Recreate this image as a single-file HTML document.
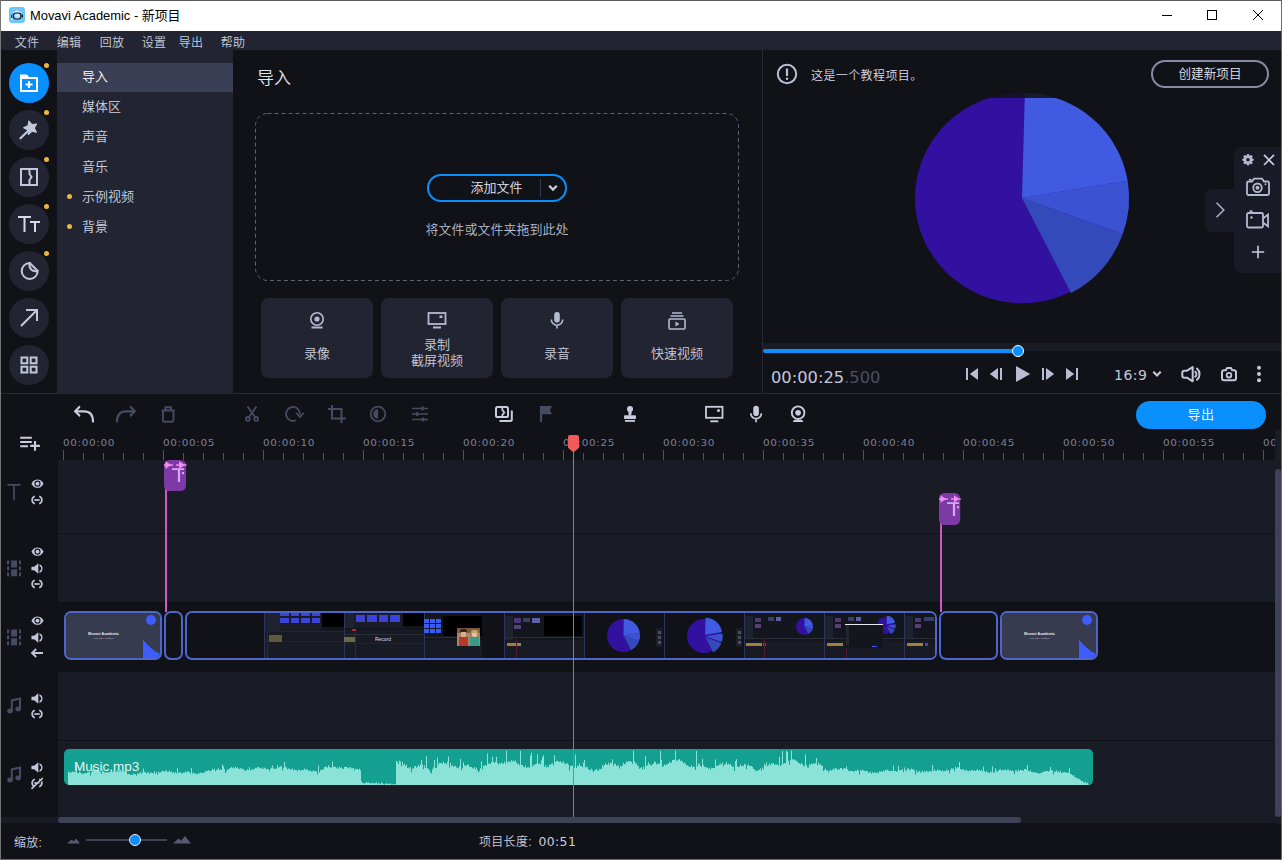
<!DOCTYPE html>
<html lang="zh-CN">
<head>
<meta charset="utf-8">
<title>Movavi Academic - 新项目</title>
<style>
*{box-sizing:border-box;margin:0;padding:0}
html,body{width:1282px;height:860px;overflow:hidden;background:#111217}
body{font-family:"Liberation Sans","Noto Sans CJK SC",sans-serif;color:#d6d9e6;font-size:13px;font-weight:350;position:relative}
.abs{position:absolute}
#win{position:absolute;left:0;top:0;width:1282px;height:860px;background:#111217;overflow:hidden}
#titlebar{position:absolute;left:1px;top:1px;width:1280px;height:30px;background:#fff;color:#000}
#titlebar .ttl{position:absolute;left:29px;top:0;height:30px;line-height:30px;font-size:12.9px;font-weight:400;color:#000;white-space:nowrap}
#menubar{position:absolute;left:1px;top:31px;width:1280px;height:19px;background:#222531}
#menubar span{position:absolute;top:0;height:21px;line-height:24px;font-size:12px;color:#c9ccdd;white-space:nowrap;letter-spacing:0.2px}
#iconcol{position:absolute;left:1px;top:50px;width:56px;height:343px;background:#111217}
.cbtn{position:absolute;left:8px;width:40px;height:40px;border-radius:50%;background:#222531}
.cbtn.on{background:#0a8fff}
.cbtn svg{position:absolute;left:0;top:0}
.ydot{position:absolute;width:5px;height:5px;border-radius:50%;background:#e9b83c}
#side{position:absolute;left:57px;top:50px;width:176px;height:343px;background:#222531}
#side .it{position:absolute;left:0;width:176px;height:29px;line-height:28px;padding-left:25px;font-size:13px;color:#cfd2e0;white-space:nowrap}
#side .it.sel{background:#3a3f55;color:#fff}
#side .b{position:absolute;left:10px;width:5px;height:5px;border-radius:50%;background:#e9b83c}
#main{position:absolute;left:233px;top:50px;width:529px;height:343px;background:#111217}
.tile{position:absolute;top:248px;width:112px;height:80px;border-radius:8px;background:#222531;text-align:center;color:#c9ccda;font-size:13px;line-height:16px}
.tile svg{position:absolute;left:46px;top:12px}
.tile .lb{position:absolute;left:0;width:112px;text-align:center;white-space:nowrap}
#player{position:absolute;left:763px;top:50px;width:518px;height:343px;background:#111217;overflow:hidden}
#tl{position:absolute;left:1px;top:394px;width:1280px;height:430px;background:#111217}
.trk{position:absolute;left:57px;width:1217px;background:#1a1c25}
.tick{position:absolute;width:1px;background:#50556c}
.rl{position:absolute;top:36px;font-family:"DejaVu Sans","Liberation Sans",sans-serif;font-weight:400;font-size:9px;letter-spacing:0.55px;transform:scaleX(1.16);transform-origin:0 0;color:#7a7f98;white-space:nowrap;line-height:12px}
.clip{position:absolute;top:217px;height:49px;border:2px solid #4e66c9;border-radius:7px;overflow:hidden;background:#111217}
#bot{position:absolute;left:1px;top:824px;width:1280px;height:35px;background:#111217}
</style>
</head>
<body>
<div id="win">
<!-- title bar -->
<div id="titlebar">
  <svg class="abs" style="left:8px;top:6px" width="16" height="16" viewBox="0 0 16 16">
    <rect x="0" y="0" width="16" height="16" rx="3" fill="#6cc5fd"/>
    <path d="M3.300 5.900 L8 3.200 L13.300 5.900z" fill="#eaf6ff"/>
    <rect x="4.600" y="6" width="7.300" height="6" rx="2.200" fill="#a6dcfe" stroke="#0c0f16" stroke-width="1.100"/>
    <path d="M6.300 8.200 h4 l-2 1.600z" fill="#f4fbff"/>
    <path d="M11.900 9 l2.100 -1.700 v3.400z" fill="#0c0f16"/>
    <rect x="2.300" y="7.600" width="1" height="3.400" fill="#0c0f16"/>
    <rect x="2.200" y="11.200" width="1.300" height="1.300" fill="#f4fbff"/>
  </svg>
  <div class="ttl">Movavi Academic - 新项目</div>
  <svg class="abs" style="left:1156px;top:4px" width="116" height="22" viewBox="0 0 116 22" fill="none" stroke="#000" stroke-width="1">
    <path d="M5 10.5 H15"/>
    <rect x="50.5" y="5.5" width="9" height="9"/>
    <path d="M96 5 L106 15 M106 5 L96 15"/>
  </svg>
</div>
<!-- menu bar -->
<div id="menubar">
  <span style="left:13.7px">文件</span><span style="left:55.7px">编辑</span><span style="left:98.7px">回放</span><span style="left:140.7px">设置</span><span style="left:177.7px">导出</span><span style="left:219.7px">帮助</span>
</div>
<!-- icon column -->
<div id="iconcol">
  <div class="cbtn on" style="top:13px"><svg width="40" height="40" viewBox="0 0 40 40"><path d="M11 11.5 h7 l2 2.5 h9 v15 h-18 z" fill="#fff"/><rect x="13" y="16" width="14" height="11" fill="#0a8fff"/><path d="M20 18 v7 M16.5 21.5 h7" stroke="#fff" stroke-width="2"/></svg></div>
  <div class="cbtn" style="top:60px"><svg width="40" height="40" viewBox="0 0 40 40"><path d="M11.500 28.300 L19.500 20.500" stroke="#c3c7dc" stroke-width="2.200" stroke-linecap="round"/><path d="M19.87 11.17 L23.00 14.61 L27.60 13.99 L25.30 18.02 L27.32 22.21 L22.76 21.26 L19.41 24.48 L18.90 19.86 L14.80 17.66 L19.04 15.75Z" fill="#c3c7dc" stroke="#c3c7dc" stroke-width="1.200" stroke-linejoin="round"/></svg></div>
  <div class="cbtn" style="top:107px"><svg width="40" height="40" viewBox="0 0 40 40" fill="none" stroke="#c3c7dc" stroke-width="2"><rect x="12" y="12" width="16" height="16"/><path d="M20.5 12 v5 l2 3 -2 3 v5"/></svg></div>
  <div class="cbtn" style="top:154px"><svg width="40" height="40" viewBox="0 0 40 40" fill="none" stroke="#d6d9ea" stroke-width="2"><path d="M9 13 h13 M15.5 13 v15"/><path d="M21 18 h10 M26 18 v10"/></svg></div>
  <div class="cbtn" style="top:201px"><svg width="40" height="40" viewBox="0 0 40 40" fill="none" stroke="#c3c7dc" stroke-width="2"><path d="M20.700 12 a8 8 0 1 0 8 8 c-5.500 1.300 -9.300 -2.700 -8 -8z"/><path d="M20.700 12 l8 8"/></svg></div>
  <div class="cbtn" style="top:248px"><svg width="40" height="40" viewBox="0 0 40 40" fill="none" stroke="#c3c7dc" stroke-width="2"><path d="M12 28 L28 12 M17 12 h11 v11"/></svg></div>
  <div class="cbtn" style="top:295px"><svg width="40" height="40" viewBox="0 0 40 40" fill="none" stroke="#c3c7dc" stroke-width="2"><rect x="12.500" y="12.500" width="5.800" height="5.800"/><rect x="21.700" y="12.500" width="5.800" height="5.800"/><rect x="12.500" y="21.700" width="5.800" height="5.800"/><rect x="21.700" y="21.700" width="5.800" height="5.800"/></svg></div>
  <div class="ydot" style="left:43px;top:13px"></div>
  <div class="ydot" style="left:43px;top:60px"></div>
  <div class="ydot" style="left:43px;top:107px"></div>
  <div class="ydot" style="left:43px;top:154px"></div>
  <div class="ydot" style="left:43px;top:201px"></div>
</div>
<!-- side list -->
<div id="side">
  <div class="it sel" style="top:13px">导入</div>
  <div class="it" style="top:43px">媒体区</div>
  <div class="it" style="top:73px">声音</div>
  <div class="it" style="top:103px">音乐</div>
  <div class="it" style="top:133px">示例视频</div>
  <div class="it" style="top:163px">背景</div>
  <div class="b" style="top:144px"></div>
  <div class="b" style="top:174px"></div>
</div>
<!-- import panel -->
<div id="main">
  <div class="abs" style="left:24px;top:17px;font-size:17px;line-height:24px;color:#e3e5f0">导入</div>
  <svg class="abs" style="left:22px;top:63px" width="485" height="169" viewBox="0 0 485 169" fill="none"><rect x="0.5" y="0.5" width="483" height="167" rx="12" stroke="#5d627a" stroke-width="1" stroke-dasharray="4 3"/></svg>
  <div class="abs" style="left:194px;top:124px;width:140px;height:28px;border:2px solid #0a8fff;border-radius:14px"></div>
  <div class="abs" style="left:194px;top:124px;width:113px;height:28px;line-height:27px;text-align:center;padding-left:26px;font-size:13px;color:#e3e5f0">添加文件</div>
  <div class="abs" style="left:307px;top:129px;width:1px;height:18px;background:#353a4e"></div>
  <svg class="abs" style="left:314.5px;top:134px" width="10" height="8" viewBox="0 0 10 8" fill="none" stroke="#c9ccdd" stroke-width="2.300"><path d="M1.200 1.800 L5 5.600 L8.800 1.800"/></svg>
  <div class="abs" style="left:22px;top:171px;width:484px;text-align:center;font-size:13px;line-height:18px;color:#b9bccd">将文件或文件夹拖到此处</div>

  <div class="tile" style="left:28px"><svg width="20" height="22" viewBox="0 0 20 22" fill="none" stroke="#b5b9d0" stroke-width="1.600"><circle cx="10" cy="9" r="6.200"/><circle cx="10" cy="9" r="2.600" fill="#b5b9d0" stroke="none"/><path d="M4.500 17.500 h11" stroke-width="2"/></svg><div class="lb" style="top:47.5px">录像</div></div>
  <div class="tile" style="left:148px"><svg width="20" height="22" viewBox="0 0 20 22" fill="none" stroke="#b5b9d0" stroke-width="1.800"><rect x="1.500" y="3" width="17" height="11"/><rect x="12.500" y="5.500" width="3" height="2.500" fill="#b5b9d0" stroke="none"/><path d="M6 17.500 h8" stroke-width="2"/></svg><div class="lb" style="top:39px">录制</div><div class="lb" style="top:55px">截屏视频</div></div>
  <div class="tile" style="left:268px"><svg width="20" height="22" viewBox="0 0 20 22" fill="none" stroke="#b5b9d0" stroke-width="1.600"><rect x="7.200" y="2" width="5.600" height="10.500" rx="2.800" fill="#b5b9d0" stroke="none"/><path d="M4.300 9.500 a5.700 5.700 0 0 0 11.400 0 M10 15.200 v3.300"/></svg><div class="lb" style="top:47.5px">录音</div></div>
  <div class="tile" style="left:388px"><svg width="20" height="22" viewBox="0 0 20 22" fill="none" stroke="#b5b9d0" stroke-width="1.600"><path d="M5 3 h10 M3.500 6 h13"/><rect x="2" y="9" width="16" height="10" rx="1"/><path d="M8.500 11.500 l4 2.500 -4 2.500z" fill="#b5b9d0" stroke="none"/></svg><div class="lb" style="top:47.5px">快速视频</div></div>
</div>
<div class="abs" style="left:762px;top:50px;width:1px;height:343px;background:#262935"></div>
<div class="abs" style="left:1px;top:393px;width:1280px;height:1px;background:#262935"></div>

<!-- player -->
<div id="player">
  <svg class="abs" style="left:139px;top:27.5px" width="240" height="240" viewBox="-120 -120 240 240">
    <ellipse cx="0" cy="0" rx="107" ry="105.3" fill="#3311a0"/>
    <path d="M0 0 L2.9 -105.3 A107 105.3 0 0 1 105.600 -17.200 Z" fill="#405be1"/>
    <path d="M0 0 L105.600 -17.200 A107 105.3 0 0 1 100.700 36 Z" fill="#3b53d2"/>
    <path d="M0 0 L100.700 36 A107 105.3 0 0 1 49 95.100 Z" fill="#354aba"/>
  </svg>
  <div class="abs" style="left:0;top:0;width:518px;height:47.5px;background:rgba(17,18,23,0.87)"></div>
  <svg class="abs" style="left:13px;top:13px" width="22" height="22" viewBox="0 0 22 22" fill="none" stroke="#bcc0d6" stroke-width="2"><circle cx="11" cy="11" r="9.200"/><path d="M11 5.500 v7.500" stroke-width="2.200"/><circle cx="11" cy="15.800" r="1.200" fill="#c3c7dc" stroke="none"/></svg>
  <div class="abs" style="left:48px;top:16.5px;font-size:12px;line-height:18px;color:#d6d9e6;letter-spacing:0.4px;white-space:nowrap">这是一个教程项目。</div>
  <div class="abs" style="left:388px;top:10px;width:118px;height:28px;border:2px solid #858aa6;border-radius:14px;text-align:center;line-height:24px;font-size:12.6px;color:#e3e5f0;letter-spacing:0">创建新项目</div>

  <!-- floating tool panel -->
  <div class="abs" style="left:442px;top:138.5px;width:30px;height:43px;background:#181a26;border-radius:6px 0 0 6px"></div>
  <div class="abs" style="left:471px;top:97px;width:48px;height:126px;background:#181a26;border-radius:7px 0 0 7px"></div>
  <svg class="abs" style="left:450px;top:150px" width="14" height="20" viewBox="0 0 14 20" fill="none" stroke="#a9adc6" stroke-width="1.600"><path d="M3.500 2.800 L10.800 10 L3.500 17.200"/></svg>
  <svg class="abs" style="left:478px;top:103px" width="14" height="14" viewBox="0 0 14 14"><g fill="#b5b9d0"><circle cx="7" cy="6.700" r="4.200"/><rect x="5.700" y="1" width="2.600" height="11.400" rx="0.800"/><rect x="5.700" y="1" width="2.600" height="11.400" rx="0.800" transform="rotate(45 7 6.700)"/><rect x="5.700" y="1" width="2.600" height="11.400" rx="0.800" transform="rotate(90 7 6.700)"/><rect x="5.700" y="1" width="2.600" height="11.400" rx="0.800" transform="rotate(135 7 6.700)"/></g><circle cx="7" cy="6.700" r="1.700" fill="#181a26"/></svg>
  <svg class="abs" style="left:499px;top:103px" width="14" height="14" viewBox="0 0 14 14" fill="none" stroke="#c9ccdd" stroke-width="1.700"><path d="M2 1.800 L12 12 M12 1.800 L2 12"/></svg>
  <svg class="abs" style="left:482px;top:126px" width="26" height="22" viewBox="0 0 26 22" fill="none" stroke="#b5b9d0" stroke-width="1.800"><path d="M3.500 5.500 h3.500 l2 -2.800 h8 l2 2.800 h3.500 a1.500 1.500 0 0 1 1.500 1.500 v10.500 a1.500 1.500 0 0 1 -1.500 1.500 h-19 a1.500 1.500 0 0 1 -1.500 -1.500 v-10.500 a1.500 1.500 0 0 1 1.500 -1.500z"/><circle cx="12.500" cy="11.800" r="4.300"/><circle cx="12.500" cy="11.800" r="2" fill="#b5b9d0" stroke="none"/><circle cx="20.500" cy="8.300" r="1" fill="#b5b9d0" stroke="none"/><path d="M4 3.800 h2.500" stroke-width="1.800"/></svg>
  <svg class="abs" style="left:482px;top:159px" width="26" height="22" viewBox="0 0 26 22" fill="none" stroke="#b5b9d0" stroke-width="1.800"><rect x="2" y="4" width="16" height="14.500" rx="1.500"/><path d="M18 9.500 l5 -4 v12 l-5 -4"/><circle cx="6.500" cy="8.500" r="1.200" fill="#b5b9d0" stroke="none"/><path d="M4.500 2.300 h3" stroke-width="1.800"/></svg>
  <svg class="abs" style="left:488px;top:195px" width="14" height="14" viewBox="0 0 14 14" fill="none" stroke="#c9ccdd" stroke-width="1.600"><path d="M7 0.800 v12.400 M0.800 7 h12.400"/></svg>

  <!-- progress -->
  <div class="abs" style="left:0;top:293px;width:518px;height:8px;background:#1a1c25"></div>
  <div class="abs" style="left:0;top:299px;width:255px;height:4px;background:#0a8fff;border-radius:2px"></div>
  <div class="abs" style="left:249px;top:295px;width:12px;height:12px;border-radius:50%;background:#0a8fff;border:1.500px solid #fff"></div>
  <div class="abs" style="left:8px;top:314px;font-family:'DejaVu Sans','Liberation Sans',sans-serif;font-weight:400;font-size:16.300px;line-height:28px;color:#c3c7dc;white-space:nowrap">00:00:25<span style="color:#4a4f63">.500</span></div>
  <!-- transport -->
  <svg class="abs" style="left:200px;top:314px" width="120" height="20" viewBox="0 0 120 20" fill="#b8bcd4">
    <rect x="3" y="4" width="2" height="12"/><path d="M15 4 v12 l-8.200 -6z"/>
    <path d="M35 4 v12 l-8.200 -6z"/><rect x="37" y="4" width="2" height="12"/>
    <path d="M53 2 v16 l14.200 -8z"/>
    <rect x="79" y="4" width="2" height="12"/><path d="M83 4 v12 l8.200 -6z"/>
    <path d="M103 4 v12 l8.200 -6z"/><rect x="113" y="4" width="2" height="12"/>
  </svg>
  <div class="abs" style="left:351px;top:314px;font-family:'DejaVu Sans','Liberation Sans',sans-serif;font-weight:400;font-size:14px;letter-spacing:0.500px;line-height:22px;color:#c3c7dc;white-space:nowrap">16:9</div>
  <svg class="abs" style="left:389px;top:320px" width="10" height="8" viewBox="0 0 10 8" fill="none" stroke="#c3c7dc" stroke-width="2.200"><path d="M1.300 1.800 L5 5.500 L8.700 1.800"/></svg>
  <svg class="abs" style="left:416px;top:313px" width="24" height="22" viewBox="0 0 24 22" fill="none" stroke="#c3c7dc" stroke-width="2" stroke-linejoin="round" stroke-linecap="round"><path d="M5.300 7.700 h2.700 l5.700 -3.600 v14.200 l-5.700 -3.600 h-2.700 a2 2 0 0 1 -2 -2 v-3 a2 2 0 0 1 2 -2z"/><path d="M16.300 8.700 a3.300 3.300 0 0 1 0 5"/><path d="M18 5.600 a7.400 7.400 0 0 1 0 11.200"/></svg>
  <svg class="abs" style="left:456px;top:314px" width="20" height="20" viewBox="0 0 20 20" fill="none" stroke="#c3c7dc" stroke-width="2" stroke-linejoin="round"><path d="M5 6.200 h1.800 l1.200 -2.200 h4 l1.200 2.200 h1.800 a2 2 0 0 1 2 2 v6.100 a2 2 0 0 1 -2 2 h-10 a2 2 0 0 1 -2 -2 v-6.100 a2 2 0 0 1 2 -2z"/><circle cx="10" cy="11.200" r="2.300" stroke-width="1.800"/></svg>
  <svg class="abs" style="left:492px;top:314px" width="8" height="20" viewBox="0 0 8 20" fill="#c3c7dc"><circle cx="4" cy="3.800" r="2"/><circle cx="4" cy="10" r="2"/><circle cx="4" cy="16.200" r="2"/></svg>
</div>
<!-- timeline -->
<div id="tl">
<svg class="abs" style="left:71px;top:9px" width="24" height="20" viewBox="0 0 24 20" ><path d="M7.300 4 L3.300 8.300 L7.300 12.600" fill="none" stroke="#c9ccdd" stroke-width="2.200" stroke-linejoin="round" stroke-linecap="round"/><path d="M3.300 8.300 H12 C18 8.300 21 12 21 18.600" fill="none" stroke="#c9ccdd" stroke-width="2.200" stroke-linecap="round"/></svg>
<svg class="abs" style="left:113px;top:9px" width="24" height="20" viewBox="0 0 24 20" ><path d="M16.700 4 L20.700 8.300 L16.700 12.600" fill="none" stroke="#464b62" stroke-width="2.200" stroke-linejoin="round" stroke-linecap="round"/><path d="M20.700 8.300 H12 C6 8.300 3 12 3 18.600" fill="none" stroke="#464b62" stroke-width="2.200" stroke-linecap="round"/></svg>
<svg class="abs" style="left:158px;top:9.5px" width="18" height="20" viewBox="0 0 18 20" ><path d="M4 6.500 h10.500 v10 a1.200 1.200 0 0 1 -1.200 1.200 h-8.100 a1.200 1.200 0 0 1 -1.200 -1.200z M2.700 6.500 h13 M6.500 6 v-2.800 h5.500 v2.800" fill="none" stroke="#464b62" stroke-width="1.900"/></svg>
<svg class="abs" style="left:242px;top:10px" width="18" height="20" viewBox="0 0 18 20" ><g fill="none" stroke="#464b62" stroke-width="1.800"><path d="M4.500 2.500 L12.200 13.300 M13.500 2.500 L5.800 13.300"/><circle cx="4.800" cy="14.900" r="1.900"/><circle cx="13.200" cy="14.900" r="1.900"/></g></svg>
<svg class="abs" style="left:283px;top:10px" width="22" height="20" viewBox="0 0 22 20" ><path d="M12 16.300 A7 7 0 1 1 16 10.600" fill="none" stroke="#464b62" stroke-width="1.800"/><path d="M12.300 8.700 L16 13.200 L19.700 8.700" fill="none" stroke="#464b62" stroke-width="1.800"/></svg>
<svg class="abs" style="left:325px;top:9px" width="22" height="22" viewBox="0 0 22 22" ><path d="M6 2 V15.500 H20 M2 6 H15.500 V20" fill="none" stroke="#464b62" stroke-width="2"/></svg>
<svg class="abs" style="left:367px;top:10px" width="20" height="20" viewBox="0 0 20 20" ><circle cx="10" cy="10" r="7.300" fill="none" stroke="#464b62" stroke-width="1.800"/><path d="M10 5.200 a4.800 4.800 0 0 0 0 9.600z" fill="#464b62"/></svg>
<svg class="abs" style="left:409px;top:10px" width="20" height="20" viewBox="0 0 20 20" ><g stroke="#464b62" stroke-width="1.700"><path d="M2 4.500 h16 M2 10 h16 M2 15.500 h16"/></g><g fill="#464b62"><rect x="11.300" y="2.600" width="2.600" height="3.800" rx="1"/><rect x="5.800" y="8.100" width="2.600" height="3.800" rx="1"/><rect x="11.800" y="13.600" width="2.600" height="3.800" rx="1"/></g></svg>
<svg class="abs" style="left:492px;top:10px" width="24" height="20" viewBox="0 0 24 20" ><rect x="3" y="3" width="12" height="10.100" rx="1.600" fill="none" stroke="#c9ccdd" stroke-width="2"/><path d="M9.300 3 V6 L11.300 8.500 L9.300 11 V13.500" fill="none" stroke="#c9ccdd" stroke-width="1.800"/><path d="M6.500 17 H17.300 a1.500 1.500 0 0 0 1.500 -1.500 V6.500" fill="none" stroke="#c9ccdd" stroke-width="2"/></svg>
<svg class="abs" style="left:537px;top:10px" width="18" height="20" viewBox="0 0 18 20" ><rect x="1.900" y="2" width="2.200" height="16" fill="#464b62"/><path d="M2 2 H14 L11.900 6.200 L14 10.300 H2z" fill="#464b62"/></svg>
<svg class="abs" style="left:621px;top:10px" width="18" height="20" viewBox="0 0 18 20" ><circle cx="8" cy="5" r="3" fill="#c9ccdd"/><path d="M6.300 6.500 h3.400 l-0.400 5 h-2.600z" fill="#c9ccdd"/><rect x="2" y="11.300" width="12" height="3.700" rx="1" fill="#c9ccdd"/><rect x="3" y="16" width="10" height="1.800" fill="#c9ccdd"/></svg>
<svg class="abs" style="left:702px;top:10px" width="22" height="20" viewBox="0 0 22 20" ><rect x="3" y="2.800" width="16.500" height="11" fill="none" stroke="#c9ccdd" stroke-width="1.800"/><circle cx="15.500" cy="6.400" r="1.500" fill="#c9ccdd"/><path d="M7.300 17.300 h8" stroke="#c9ccdd" stroke-width="1.900"/></svg>
<svg class="abs" style="left:746px;top:10px" width="18" height="20" viewBox="0 0 18 20" ><rect x="6.300" y="1.800" width="5.600" height="10.300" rx="2.800" fill="#c9ccdd"/><path d="M3.800 9.300 a5.300 5.300 0 0 0 10.600 0 M9.100 14.600 v3.600" fill="none" stroke="#c9ccdd" stroke-width="1.700"/></svg>
<svg class="abs" style="left:787px;top:10px" width="20" height="20" viewBox="0 0 20 20" ><circle cx="10.100" cy="8.700" r="6.300" fill="none" stroke="#c9ccdd" stroke-width="1.900"/><circle cx="10.100" cy="8.700" r="2.800" fill="#c9ccdd"/><path d="M6.300 15.800 H13.900 L15.500 18 H4.700z" fill="#c9ccdd"/></svg>
<div class="abs" style="left:1135px;top:7px;width:130px;height:28px;border-radius:14px;background:#0a8fff;color:#fff;text-align:center;line-height:27px;font-size:13px;letter-spacing:0.500px">导出</div>
<svg class="abs" style="left:18px;top:41px" width="24" height="18" viewBox="0 0 24 18" ><g stroke="#c9ccdd" stroke-width="2.100"><path d="M1.200 2.700 h11.600 M1.200 7 h11.600 M1.200 11.200 h7.800"/><path d="M16 6 v9.800 M11.200 10.900 h9.700"/></g></svg>
<div class="rl" style="left:62px;top:43px">00:00:00</div>
<div class="rl" style="left:162px;top:43px">00:00:05</div>
<div class="rl" style="left:262px;top:43px">00:00:10</div>
<div class="rl" style="left:362px;top:43px">00:00:15</div>
<div class="rl" style="left:462px;top:43px">00:00:20</div>
<div class="rl" style="left:562px;top:43px">00:00:25</div>
<div class="rl" style="left:662px;top:43px">00:00:30</div>
<div class="rl" style="left:762px;top:43px">00:00:35</div>
<div class="rl" style="left:862px;top:43px">00:00:40</div>
<div class="rl" style="left:962px;top:43px">00:00:45</div>
<div class="rl" style="left:1062px;top:43px">00:00:50</div>
<div class="rl" style="left:1162px;top:43px">00:00:55</div>
<div class="rl" style="left:1262px;top:43px">00:01:00</div>
<div class="tick" style="left:62px;top:56px;height:10px"></div><div class="tick" style="left:82px;top:59px;height:7px"></div><div class="tick" style="left:102px;top:59px;height:7px"></div><div class="tick" style="left:122px;top:59px;height:7px"></div><div class="tick" style="left:142px;top:59px;height:7px"></div><div class="tick" style="left:162px;top:56px;height:10px"></div><div class="tick" style="left:182px;top:59px;height:7px"></div><div class="tick" style="left:202px;top:59px;height:7px"></div><div class="tick" style="left:222px;top:59px;height:7px"></div><div class="tick" style="left:242px;top:59px;height:7px"></div><div class="tick" style="left:262px;top:56px;height:10px"></div><div class="tick" style="left:282px;top:59px;height:7px"></div><div class="tick" style="left:302px;top:59px;height:7px"></div><div class="tick" style="left:322px;top:59px;height:7px"></div><div class="tick" style="left:342px;top:59px;height:7px"></div><div class="tick" style="left:362px;top:56px;height:10px"></div><div class="tick" style="left:382px;top:59px;height:7px"></div><div class="tick" style="left:402px;top:59px;height:7px"></div><div class="tick" style="left:422px;top:59px;height:7px"></div><div class="tick" style="left:442px;top:59px;height:7px"></div><div class="tick" style="left:462px;top:56px;height:10px"></div><div class="tick" style="left:482px;top:59px;height:7px"></div><div class="tick" style="left:502px;top:59px;height:7px"></div><div class="tick" style="left:522px;top:59px;height:7px"></div><div class="tick" style="left:542px;top:59px;height:7px"></div><div class="tick" style="left:562px;top:56px;height:10px"></div><div class="tick" style="left:582px;top:59px;height:7px"></div><div class="tick" style="left:602px;top:59px;height:7px"></div><div class="tick" style="left:622px;top:59px;height:7px"></div><div class="tick" style="left:642px;top:59px;height:7px"></div><div class="tick" style="left:662px;top:56px;height:10px"></div><div class="tick" style="left:682px;top:59px;height:7px"></div><div class="tick" style="left:702px;top:59px;height:7px"></div><div class="tick" style="left:722px;top:59px;height:7px"></div><div class="tick" style="left:742px;top:59px;height:7px"></div><div class="tick" style="left:762px;top:56px;height:10px"></div><div class="tick" style="left:782px;top:59px;height:7px"></div><div class="tick" style="left:802px;top:59px;height:7px"></div><div class="tick" style="left:822px;top:59px;height:7px"></div><div class="tick" style="left:842px;top:59px;height:7px"></div><div class="tick" style="left:862px;top:56px;height:10px"></div><div class="tick" style="left:882px;top:59px;height:7px"></div><div class="tick" style="left:902px;top:59px;height:7px"></div><div class="tick" style="left:922px;top:59px;height:7px"></div><div class="tick" style="left:942px;top:59px;height:7px"></div><div class="tick" style="left:962px;top:56px;height:10px"></div><div class="tick" style="left:982px;top:59px;height:7px"></div><div class="tick" style="left:1002px;top:59px;height:7px"></div><div class="tick" style="left:1022px;top:59px;height:7px"></div><div class="tick" style="left:1042px;top:59px;height:7px"></div><div class="tick" style="left:1062px;top:56px;height:10px"></div><div class="tick" style="left:1082px;top:59px;height:7px"></div><div class="tick" style="left:1102px;top:59px;height:7px"></div><div class="tick" style="left:1122px;top:59px;height:7px"></div><div class="tick" style="left:1142px;top:59px;height:7px"></div><div class="tick" style="left:1162px;top:56px;height:10px"></div><div class="tick" style="left:1182px;top:59px;height:7px"></div><div class="tick" style="left:1202px;top:59px;height:7px"></div><div class="tick" style="left:1222px;top:59px;height:7px"></div><div class="tick" style="left:1242px;top:59px;height:7px"></div><div class="tick" style="left:1262px;top:56px;height:10px"></div>
<div class="abs" style="left:1274px;top:36px;width:6px;height:394px;background:#1a1c25"></div>
<div class="abs" style="left:1274px;top:75px;width:6px;height:348px;background:#3d4259;border-radius:3px"></div>
<div class="trk" style="top:66px;height:73px"></div>
<div class="trk" style="top:140px;height:68px"></div>
<div class="trk" style="top:278px;height:68px"></div>
<div class="trk" style="top:347px;height:76px"></div>
<div class="abs" style="left:0;top:423px;width:1274px;height:6px;background:#1a1c25"></div>
<div class="abs" style="left:57px;top:423px;width:963px;height:6px;background:#3d4259;border-radius:3px"></div>
<svg class="abs" style="left:5px;top:89px" width="16" height="18" viewBox="0 0 16 18" ><path d="M1.500 1.800 h13 M8 1.800 v15.500" stroke="#464b62" stroke-width="1.700" fill="none"/></svg>
<svg class="abs" style="left:29.50px;top:85.35px" width="13" height="9.3" viewBox="0 0 14 10" preserveAspectRatio="none"><path d="M0.400 5 C2.500 1.300 5 0.500 7 0.500 S11.500 1.300 13.600 5 C11.500 8.700 9 9.500 7 9.500 S2.500 8.700 0.400 5z" fill="#c3c7dc"/><circle cx="7" cy="5" r="3.300" fill="#111217"/><circle cx="7" cy="5" r="2.100" fill="#c3c7dc"/></svg>
<svg class="abs" style="left:29.00px;top:101.00px" width="14" height="10" viewBox="0 0 14 10" preserveAspectRatio="none"><path d="M4.800 1.300 a3.900 3.900 0 0 0 0 7.400 M9.200 1.300 a3.900 3.900 0 0 1 0 7.400" fill="none" stroke="#c3c7dc" stroke-width="1.700"/><path d="M4.300 5 h5.400" stroke="#c3c7dc" stroke-width="1.700"/></svg>
<svg class="abs" style="left:5.50px;top:165.50px" width="14.4" height="17" viewBox="0 0 15 17" preserveAspectRatio="none"><g fill="#464b62"><rect x="0" y="0.500" width="2.300" height="3.800"/><rect x="0" y="6.500" width="2.300" height="3.800"/><rect x="0" y="12.500" width="2.300" height="3.800"/><rect x="12.500" y="0.500" width="2.300" height="3.800"/><rect x="12.500" y="6.500" width="2.300" height="3.800"/><rect x="12.500" y="12.500" width="2.300" height="3.800"/><rect x="4.300" y="0.500" width="6.200" height="7"/><rect x="4.300" y="9.300" width="6.200" height="7"/></g></svg>
<svg class="abs" style="left:29.50px;top:153.35px" width="13" height="9.3" viewBox="0 0 14 10" preserveAspectRatio="none"><path d="M0.400 5 C2.500 1.300 5 0.500 7 0.500 S11.500 1.300 13.600 5 C11.500 8.700 9 9.500 7 9.500 S2.500 8.700 0.400 5z" fill="#c3c7dc"/><circle cx="7" cy="5" r="3.300" fill="#111217"/><circle cx="7" cy="5" r="2.100" fill="#c3c7dc"/></svg>
<svg class="abs" style="left:29.80px;top:168.50px" width="12.8" height="11" viewBox="0 0 14 12" preserveAspectRatio="none"><path d="M0.500 4 h3 l4.500 -3.800 v11.600 l-4.500 -3.800 h-3z" fill="#c3c7dc"/><path d="M9.300 1.300 a5 5 0 0 1 0 9.400 v-1.900 a3 3 0 0 0 0 -5.600z" fill="#c3c7dc"/></svg>
<svg class="abs" style="left:29.00px;top:185.00px" width="14" height="10" viewBox="0 0 14 10" preserveAspectRatio="none"><path d="M4.800 1.300 a3.900 3.900 0 0 0 0 7.400 M9.200 1.300 a3.900 3.900 0 0 1 0 7.400" fill="none" stroke="#c3c7dc" stroke-width="1.700"/><path d="M4.300 5 h5.400" stroke="#c3c7dc" stroke-width="1.700"/></svg>
<svg class="abs" style="left:5.50px;top:234.50px" width="14.4" height="17" viewBox="0 0 15 17" preserveAspectRatio="none"><g fill="#464b62"><rect x="0" y="0.500" width="2.300" height="3.800"/><rect x="0" y="6.500" width="2.300" height="3.800"/><rect x="0" y="12.500" width="2.300" height="3.800"/><rect x="12.500" y="0.500" width="2.300" height="3.800"/><rect x="12.500" y="6.500" width="2.300" height="3.800"/><rect x="12.500" y="12.500" width="2.300" height="3.800"/><rect x="4.300" y="0.500" width="6.200" height="7"/><rect x="4.300" y="9.300" width="6.200" height="7"/></g></svg>
<svg class="abs" style="left:29.50px;top:222.35px" width="13" height="9.3" viewBox="0 0 14 10" preserveAspectRatio="none"><path d="M0.400 5 C2.500 1.300 5 0.500 7 0.500 S11.500 1.300 13.600 5 C11.500 8.700 9 9.500 7 9.500 S2.500 8.700 0.400 5z" fill="#c3c7dc"/><circle cx="7" cy="5" r="3.300" fill="#111217"/><circle cx="7" cy="5" r="2.100" fill="#c3c7dc"/></svg>
<svg class="abs" style="left:29.80px;top:237.50px" width="12.8" height="11" viewBox="0 0 14 12" preserveAspectRatio="none"><path d="M0.500 4 h3 l4.500 -3.800 v11.600 l-4.500 -3.800 h-3z" fill="#c3c7dc"/><path d="M9.300 1.300 a5 5 0 0 1 0 9.400 v-1.900 a3 3 0 0 0 0 -5.600z" fill="#c3c7dc"/></svg>
<svg class="abs" style="left:29.00px;top:254.00px" width="14" height="10" viewBox="0 0 14 10" preserveAspectRatio="none"><path d="M13 5 H2.500 M6.200 1 L2 5 L6.200 9" fill="none" stroke="#c3c7dc" stroke-width="1.800"/></svg>
<svg class="abs" style="left:5.50px;top:303.00px" width="15" height="17" viewBox="0 0 15 17" preserveAspectRatio="none"><path d="M4.800 13.800 V3.400 L13 1.600 V11.800" fill="none" stroke="#464b62" stroke-width="2"/><ellipse cx="3" cy="14" rx="2.800" ry="2.400" fill="#464b62"/><ellipse cx="11.200" cy="12" rx="2.800" ry="2.400" fill="#464b62"/></svg>
<svg class="abs" style="left:29.80px;top:298.50px" width="12.8" height="11" viewBox="0 0 14 12" preserveAspectRatio="none"><path d="M0.500 4 h3 l4.500 -3.800 v11.600 l-4.500 -3.800 h-3z" fill="#c3c7dc"/><path d="M9.300 1.300 a5 5 0 0 1 0 9.400 v-1.900 a3 3 0 0 0 0 -5.600z" fill="#c3c7dc"/></svg>
<svg class="abs" style="left:29.00px;top:315.00px" width="14" height="10" viewBox="0 0 14 10" preserveAspectRatio="none"><path d="M4.800 1.300 a3.900 3.900 0 0 0 0 7.400 M9.200 1.300 a3.900 3.900 0 0 1 0 7.400" fill="none" stroke="#c3c7dc" stroke-width="1.700"/><path d="M4.300 5 h5.400" stroke="#c3c7dc" stroke-width="1.700"/></svg>
<svg class="abs" style="left:5.50px;top:372.00px" width="15" height="17" viewBox="0 0 15 17" preserveAspectRatio="none"><path d="M4.800 13.800 V3.400 L13 1.600 V11.800" fill="none" stroke="#464b62" stroke-width="2"/><ellipse cx="3" cy="14" rx="2.800" ry="2.400" fill="#464b62"/><ellipse cx="11.200" cy="12" rx="2.800" ry="2.400" fill="#464b62"/></svg>
<svg class="abs" style="left:29.80px;top:367.50px" width="12.8" height="11" viewBox="0 0 14 12" preserveAspectRatio="none"><path d="M0.500 4 h3 l4.500 -3.800 v11.600 l-4.500 -3.800 h-3z" fill="#c3c7dc"/><path d="M9.300 1.300 a5 5 0 0 1 0 9.400 v-1.900 a3 3 0 0 0 0 -5.600z" fill="#c3c7dc"/></svg>
<svg class="abs" style="left:29.00px;top:384.00px" width="14" height="10" viewBox="0 0 14 10" preserveAspectRatio="none"><path d="M4.800 1.300 a3.900 3.900 0 0 0 0 7.400 M9.200 1.300 a3.900 3.900 0 0 1 0 7.400" fill="none" stroke="#c3c7dc" stroke-width="1.700"/><path d="M4.300 5 h5.400" stroke="#c3c7dc" stroke-width="1.700"/></svg>
<svg class="abs" style="left:29px;top:382px" width="14" height="14" viewBox="0 0 14 14" ><path d="M1.500 12.800 L12.800 2" stroke="#c9ccdd" stroke-width="1.600"/><path d="M3.300 13.300 L13.300 3.300" stroke="#111217" stroke-width="1"/></svg>
<div class="abs" style="left:164px;top:94px;width:2px;height:124px;background:#d256c6"></div>
<div class="abs" style="left:939px;top:126px;width:2px;height:92px;background:#d256c6"></div>
<svg class="abs" style="left:163px;top:66px" width="24" height="31" viewBox="0 0 24 31"><rect x="0" y="0" width="22" height="31" rx="5.500" fill="#7d3aa6"/><g transform="translate(0 0)"><path d="M0 4.300 H9 v1.400 H0z M1.500 1.300 L7.200 5 L1.500 8.700z M12 4.300 H22.5 v1.400 H12z M15 1.300 L21.2 5 L15 8.700z" fill="#f28ef0"/><path d="M8 8.200 h12 v1.900 h-12z M13.900 8.200 h2.200 v13.800 h-2.200z M18 12 h2 v2.200 h-2z" fill="#d9a6f0"/></g></svg>
<svg class="abs" style="left:938px;top:99px" width="23.2" height="32" viewBox="0 0 23.2 32"><rect x="0" y="0" width="21.2" height="32" rx="5.500" fill="#7d3aa6"/><g transform="translate(0 1)"><path d="M0 4.300 H9 v1.400 H0z M1.500 1.300 L7.200 5 L1.500 8.700z M12 4.300 H21.7 v1.400 H12z M15 1.300 L20.4 5 L15 8.700z" fill="#f28ef0"/><path d="M8 8.200 h12 v1.900 h-12z M13.900 8.200 h2.200 v13.800 h-2.200z M18 12 h2 v2.200 h-2z" fill="#d9a6f0"/></g></svg>
<div class="clip" style="left:63px;width:98px;background:#363b4f"><div class="abs" style="left:0;top:0;width:94px;height:45px;background:#363b4f"></div><div class="abs" style="left:-1.500px;top:18.500px;width:78px;text-align:center;font-size:3.700px;line-height:5px;font-weight:bold;color:#e8e9f2;white-space:nowrap">Movavi Academic</div><div class="abs" style="left:-1.500px;top:23.500px;width:78px;text-align:center;font-size:2.500px;line-height:3px;color:#b9bccd;white-space:nowrap">Your story matters</div><div class="abs" style="left:80px;top:2px;width:10px;height:10px;border-radius:50%;background:#3f5cff"></div><svg class="abs" style="left:76px;top:26px" width="20" height="20" viewBox="0 0 20 20"><path d="M1 0.800 C6 6 11 12.500 19 15 V20 H1z" fill="#3f5cff"/></svg></div>
<div class="clip" style="left:163px;width:19px;background:#111217"></div>
<div class="clip" style="left:184px;width:752px;background:#111217"><div class="abs" style="left:76.5px;top:0.0px;width:80.0px;height:45.0px;background:#14161d;"></div><div class="abs" style="left:76.5px;top:0.0px;width:1.0px;height:45.0px;background:#2a3560;"></div><div class="abs" style="left:156.5px;top:0.0px;width:80.0px;height:45.0px;background:#14161d;"></div><div class="abs" style="left:156.5px;top:0.0px;width:1.0px;height:45.0px;background:#2a3560;"></div><div class="abs" style="left:236.5px;top:0.0px;width:80.0px;height:45.0px;background:#14161d;"></div><div class="abs" style="left:236.5px;top:0.0px;width:1.0px;height:45.0px;background:#2a3560;"></div><div class="abs" style="left:316.5px;top:0.0px;width:80.0px;height:45.0px;background:#14161d;"></div><div class="abs" style="left:316.5px;top:0.0px;width:1.0px;height:45.0px;background:#2a3560;"></div><div class="abs" style="left:396.5px;top:0.0px;width:80.0px;height:45.0px;background:#14161d;"></div><div class="abs" style="left:396.5px;top:0.0px;width:1.0px;height:45.0px;background:#2a3560;"></div><div class="abs" style="left:476.5px;top:0.0px;width:80.0px;height:45.0px;background:#14161d;"></div><div class="abs" style="left:476.5px;top:0.0px;width:1.0px;height:45.0px;background:#2a3560;"></div><div class="abs" style="left:556.5px;top:0.0px;width:80.0px;height:45.0px;background:#14161d;"></div><div class="abs" style="left:556.5px;top:0.0px;width:1.0px;height:45.0px;background:#2a3560;"></div><div class="abs" style="left:636.5px;top:0.0px;width:80.0px;height:45.0px;background:#14161d;"></div><div class="abs" style="left:636.5px;top:0.0px;width:1.0px;height:45.0px;background:#2a3560;"></div><div class="abs" style="left:716.5px;top:0.0px;width:80.0px;height:45.0px;background:#14161d;"></div><div class="abs" style="left:716.5px;top:0.0px;width:1.0px;height:45.0px;background:#2a3560;"></div><div class="abs" style="left:77.5px;top:0.0px;width:15.0px;height:18.0px;background:#1f2230;"></div><div class="abs" style="left:92.5px;top:0.0px;width:42.0px;height:18.0px;background:#191b26;"></div><div class="abs" style="left:93.0px;top:0.0px;width:8.5px;height:3.0px;background:#3c44d8;"></div><div class="abs" style="left:103.5px;top:0.0px;width:8.5px;height:3.0px;background:#3c44d8;"></div><div class="abs" style="left:114.0px;top:0.0px;width:8.5px;height:3.0px;background:#3c44d8;"></div><div class="abs" style="left:124.5px;top:0.0px;width:8.5px;height:3.0px;background:#3c44d8;"></div><div class="abs" style="left:93.0px;top:4.5px;width:8.5px;height:5.5px;background:#3c44d8;"></div><div class="abs" style="left:103.5px;top:4.5px;width:8.5px;height:5.5px;background:#3c44d8;"></div><div class="abs" style="left:114.0px;top:4.5px;width:8.5px;height:5.5px;background:#3c44d8;"></div><div class="abs" style="left:124.5px;top:4.5px;width:8.5px;height:5.5px;background:#3c44d8;"></div><div class="abs" style="left:134.5px;top:0.0px;width:22.0px;height:14.0px;background:#000;"></div><div class="abs" style="left:77.5px;top:18.0px;width:79.0px;height:27.0px;background:#181a24;"></div><div class="abs" style="left:77.5px;top:18.0px;width:79.0px;height:1.0px;background:#22242f;"></div><div class="abs" style="left:77.5px;top:28.0px;width:79.0px;height:1.0px;background:#20222c;"></div><div class="abs" style="left:82.0px;top:21.5px;width:13.0px;height:7.0px;background:#5d5a3c;"></div><div class="abs" style="left:80.0px;top:18.0px;width:1.0px;height:27.0px;background:#4e1c2a;"></div><div class="abs" style="left:157.5px;top:0.0px;width:9.0px;height:15.0px;background:#1f2230;"></div><div class="abs" style="left:166.5px;top:0.0px;width:50.0px;height:15.0px;background:#191b26;"></div><div class="abs" style="left:168.5px;top:2.0px;width:9.8px;height:7.0px;background:#3c44d8;"></div><div class="abs" style="left:180.1px;top:2.0px;width:9.8px;height:7.0px;background:#3c44d8;"></div><div class="abs" style="left:191.7px;top:2.0px;width:9.8px;height:7.0px;background:#3c44d8;"></div><div class="abs" style="left:203.3px;top:2.0px;width:9.8px;height:7.0px;background:#3c44d8;"></div><div class="abs" style="left:216.0px;top:0.0px;width:20.5px;height:13.0px;background:#000;"></div><div class="abs" style="left:157.5px;top:17.0px;width:79.0px;height:28.0px;background:#181a24;"></div><div class="abs" style="left:157.5px;top:21.0px;width:79.0px;height:1.0px;background:#2a2c38;"></div><div class="abs" style="left:157.5px;top:30.0px;width:79.0px;height:1.0px;background:#20222c;"></div><div class="abs" style="left:157.0px;top:24.0px;width:11.0px;height:5.0px;background:#6a6a4a;"></div><div class="abs" style="left:167.7px;top:17.0px;width:1.0px;height:28.0px;background:#4e1c2a;"></div><div class="abs" style="left:165.0px;top:16.0px;width:4.0px;height:2.0px;background:#a02c3c;"></div><div class="abs" style="left:185px;top:23px;width:22px;text-align:center;font-size:5px;line-height:6px;color:#d8dae6">Record</div><div class="abs" style="left:237.0px;top:6.0px;width:5.0px;height:4.0px;background:#3a5cf0;"></div><div class="abs" style="left:243.0px;top:6.0px;width:5.0px;height:4.0px;background:#3a5cf0;"></div><div class="abs" style="left:249.0px;top:6.0px;width:5.0px;height:4.0px;background:#3a5cf0;"></div><div class="abs" style="left:237.0px;top:11.2px;width:5.0px;height:4.0px;background:#3a5cf0;"></div><div class="abs" style="left:243.0px;top:11.2px;width:5.0px;height:4.0px;background:#3a5cf0;"></div><div class="abs" style="left:249.0px;top:11.2px;width:5.0px;height:4.0px;background:#3a5cf0;"></div><div class="abs" style="left:237.0px;top:16.4px;width:5.0px;height:4.0px;background:#3a5cf0;"></div><div class="abs" style="left:243.0px;top:16.4px;width:5.0px;height:4.0px;background:#3a5cf0;"></div><div class="abs" style="left:249.0px;top:16.4px;width:5.0px;height:4.0px;background:#3a5cf0;"></div><div class="abs" style="left:255.5px;top:3.0px;width:39.0px;height:20.0px;background:#000;"></div><div class="abs" style="left:237.5px;top:24.0px;width:33.0px;height:1.0px;background:#2a2c38;"></div><div class="abs" style="left:237.5px;top:27.0px;width:57.0px;height:18.0px;background:#181a24;"></div><div class="abs" style="left:270.0px;top:15.0px;width:23.0px;height:17.5px;background:#a88468;"></div><div class="abs" style="left:270.0px;top:15.0px;width:23.0px;height:5.0px;background:#7a5a40;"></div><div class="abs" style="left:271.5px;top:23.5px;width:9.0px;height:9.0px;background:#b5382c;"></div><div class="abs" style="left:282.5px;top:24.0px;width:9.0px;height:8.5px;background:#3a9a88;"></div><div class="abs" style="left:273.5px;top:17.5px;width:5.0px;height:6.0px;background:#d8b090;border-radius:2px"></div><div class="abs" style="left:284.5px;top:18.0px;width:5.0px;height:6.0px;background:#e2c4a4;border-radius:2px"></div><div class="abs" style="left:272.5px;top:16.0px;width:7.0px;height:3.0px;background:#3a2418;border-radius:2px 2px 0 0"></div><div class="abs" style="left:283.5px;top:16.5px;width:7.0px;height:3.0px;background:#c8a060;border-radius:2px 2px 0 0"></div><div class="abs" style="left:294.5px;top:0.0px;width:22.0px;height:45.0px;background:#111217;"></div><div class="abs" style="left:318.0px;top:3.0px;width:8.0px;height:28.0px;background:#1f2230;"></div><div class="abs" style="left:327.0px;top:5.0px;width:7.0px;height:5.0px;background:#4a3a78;"></div><div class="abs" style="left:336.0px;top:5.0px;width:7.0px;height:4.0px;background:#3a3f6a;"></div><div class="abs" style="left:345.0px;top:4.5px;width:8.0px;height:5.0px;background:#5a5fa8;"></div><div class="abs" style="left:327.0px;top:12.0px;width:7.0px;height:4.0px;background:#55407a;"></div><div class="abs" style="left:356.8px;top:3.0px;width:38.5px;height:20.0px;background:#000;"></div><div class="abs" style="left:317.5px;top:24.0px;width:79.0px;height:1.0px;background:#2a2c38;"></div><div class="abs" style="left:317.5px;top:27.0px;width:79.0px;height:18.0px;background:#181a24;"></div><div class="abs" style="left:319.7px;top:30.0px;width:14.5px;height:2.6px;background:#a08040;"></div><div class="abs" style="left:329.0px;top:24.0px;width:1.0px;height:21.0px;background:#4e1c2a;"></div><div class="abs" style="left:397.5px;top:0.0px;width:79.0px;height:45.0px;background:#111217;"></div><svg class="abs" style="left:417.3px;top:3.0px" width="39.0" height="39.0" viewBox="-19.5 -19.5 39.0 39.0"><circle r="16.5" fill="#3311a0"/><path d="M0.00 0.00 L0.29 -16.50 A16.5 16.5 0 0 1 16.28 -2.67Z" fill="#405be1"/><path d="M0.00 0.00 L16.28 -2.67 A16.5 16.5 0 0 1 15.53 5.56Z" fill="#3b53d2"/><path d="M0.00 0.00 L15.53 5.56 A16.5 16.5 0 0 1 7.57 14.66Z" fill="#354aba"/></svg><div class="abs" style="left:469.0px;top:15.0px;width:6.0px;height:19.0px;background:#1c1e28;"></div><div class="abs" style="left:470.5px;top:18.0px;width:3.0px;height:3.0px;background:#4a4f63;"></div><div class="abs" style="left:470.5px;top:23.0px;width:3.0px;height:3.0px;background:#4a4f63;"></div><div class="abs" style="left:470.5px;top:28.0px;width:3.0px;height:3.0px;background:#4a4f63;"></div><div class="abs" style="left:477.5px;top:0.0px;width:79.0px;height:45.0px;background:#111217;"></div><svg class="abs" style="left:496.5px;top:3.0px" width="40" height="40" viewBox="-20 -20 40 40"><circle r="17" fill="#3311a0"/><path d="M1.18 -1.36 L1.47 -18.36 A17 17 0 0 1 17.95 -4.11Z" fill="#405be1"/><path d="M1.79 0.16 L18.57 -2.58 A17 17 0 0 1 17.80 5.89Z" fill="#3b53d2"/><path d="M1.35 1.19 L17.36 6.92 A17 17 0 0 1 9.15 16.29Z" fill="#354aba"/></svg><div class="abs" style="left:549.0px;top:15.0px;width:6.0px;height:19.0px;background:#1c1e28;"></div><div class="abs" style="left:550.5px;top:18.0px;width:3.0px;height:3.0px;background:#4a4f63;"></div><div class="abs" style="left:550.5px;top:23.0px;width:3.0px;height:3.0px;background:#4a4f63;"></div><div class="abs" style="left:550.5px;top:28.0px;width:3.0px;height:3.0px;background:#4a4f63;"></div><div class="abs" style="left:558.0px;top:3.0px;width:8.0px;height:22.0px;background:#1f2230;"></div><div class="abs" style="left:568.0px;top:4.5px;width:6.0px;height:4.0px;background:#4a3a78;"></div><div class="abs" style="left:581.0px;top:4.0px;width:6.0px;height:4.0px;background:#3a3f6a;"></div><div class="abs" style="left:589.0px;top:4.0px;width:5.0px;height:4.0px;background:#5a5fa8;"></div><div class="abs" style="left:568.0px;top:11.0px;width:6.0px;height:4.0px;background:#55407a;"></div><svg class="abs" style="left:606.2px;top:1.5px" width="23.0" height="23.0" viewBox="-11.5 -11.5 23.0 23.0"><circle r="8.5" fill="#3311a0"/><path d="M0.00 0.00 L0.15 -8.50 A8.5 8.5 0 0 1 8.39 -1.37Z" fill="#405be1"/><path d="M0.00 0.00 L8.39 -1.37 A8.5 8.5 0 0 1 8.00 2.87Z" fill="#3b53d2"/><path d="M0.00 0.00 L8.00 2.87 A8.5 8.5 0 0 1 3.90 7.55Z" fill="#354aba"/></svg><div class="abs" style="left:557.5px;top:25.0px;width:79.0px;height:1.0px;background:#2a2c38;"></div><div class="abs" style="left:557.5px;top:28.0px;width:79.0px;height:17.0px;background:#181a24;"></div><div class="abs" style="left:558.8px;top:30.0px;width:16.0px;height:3.0px;background:#a08040;"></div><div class="abs" style="left:576.0px;top:30.0px;width:3.0px;height:3.0px;background:#3c44d8;"></div><div class="abs" style="left:576.5px;top:25.0px;width:1.0px;height:20.0px;background:#4e1c2a;"></div><div class="abs" style="left:638.0px;top:3.0px;width:8.0px;height:22.0px;background:#1f2230;"></div><div class="abs" style="left:648.0px;top:4.5px;width:6.0px;height:4.0px;background:#4a3a78;"></div><div class="abs" style="left:661.0px;top:4.0px;width:6.0px;height:4.0px;background:#3a3f6a;"></div><div class="abs" style="left:669.0px;top:4.0px;width:5.0px;height:4.0px;background:#5a5fa8;"></div><div class="abs" style="left:648.0px;top:11.0px;width:6.0px;height:4.0px;background:#55407a;"></div><svg class="abs" style="left:687.1px;top:0.5px" width="23.0" height="23.0" viewBox="-11.5 -11.5 23.0 23.0"><circle r="8.5" fill="#3311a0"/><path d="M1.18 -1.36 L1.33 -9.86 A8.5 8.5 0 0 1 9.57 -2.74Z" fill="#405be1"/><path d="M1.79 0.16 L10.18 -1.21 A8.5 8.5 0 0 1 9.80 3.03Z" fill="#3b53d2"/><path d="M1.35 1.19 L9.36 4.05 A8.5 8.5 0 0 1 5.25 8.74Z" fill="#354aba"/></svg><div class="abs" style="left:637.5px;top:25.0px;width:79.0px;height:1.0px;background:#2a2c38;"></div><div class="abs" style="left:637.5px;top:28.0px;width:79.0px;height:17.0px;background:#181a24;"></div><div class="abs" style="left:639.7px;top:30.0px;width:16.0px;height:3.0px;background:#a08040;"></div><div class="abs" style="left:659.0px;top:25.0px;width:1.0px;height:20.0px;background:#4e1c2a;"></div><div class="abs" style="left:657.7px;top:10.5px;width:38.5px;height:24.0px;background:#14161d;"></div><div class="abs" style="left:657.7px;top:10.5px;width:38.5px;height:1.2px;background:#e8e9f0;"></div><div class="abs" style="left:659.0px;top:12.0px;width:3.0px;height:21.0px;background:#23252f;"></div><div class="abs" style="left:685.0px;top:33.0px;width:5.0px;height:1.2px;background:#3f5cff;"></div><div class="abs" style="left:718.0px;top:3.0px;width:8.0px;height:22.0px;background:#1f2230;"></div><div class="abs" style="left:728.0px;top:4.5px;width:6.0px;height:4.0px;background:#4a3a78;"></div><div class="abs" style="left:728.0px;top:11.0px;width:6.0px;height:4.0px;background:#55407a;"></div><div class="abs" style="left:737.0px;top:4.0px;width:10.0px;height:4.0px;background:#3a3f6a;"></div><div class="abs" style="left:717.5px;top:25.0px;width:40.0px;height:1.0px;background:#2a2c38;"></div><div class="abs" style="left:717.5px;top:28.0px;width:40.0px;height:17.0px;background:#181a24;"></div><div class="abs" style="left:719.5px;top:30.0px;width:16.0px;height:3.0px;background:#a08040;"></div><div class="abs" style="left:738.0px;top:30.0px;width:3.0px;height:3.0px;background:#3c44d8;"></div></div>
<div class="clip" style="left:938px;width:59px;background:#111217"></div>
<div class="clip" style="left:999px;width:98px;background:#363b4f"><div class="abs" style="left:0;top:0;width:94px;height:45px;background:#363b4f"></div><div class="abs" style="left:-1.500px;top:18.500px;width:78px;text-align:center;font-size:3.700px;line-height:5px;font-weight:bold;color:#e8e9f2;white-space:nowrap">Movavi Academic</div><div class="abs" style="left:-1.500px;top:23.500px;width:78px;text-align:center;font-size:2.500px;line-height:3px;color:#b9bccd;white-space:nowrap">Your story matters</div><div class="abs" style="left:80px;top:2px;width:10px;height:10px;border-radius:50%;background:#3f5cff"></div><svg class="abs" style="left:76px;top:26px" width="20" height="20" viewBox="0 0 20 20"><path d="M1 0.800 C6 6 11 12.500 19 15 V20 H1z" fill="#3f5cff"/></svg></div>
<div class="abs" style="left:63px;top:355px;width:1029px;height:36px;border-radius:5px;overflow:hidden;background:#13a090"><svg class="abs" style="left:0;top:0" width="1029" height="36" viewBox="64 749 1029 36"><path d="M68 785 L68 771.5 L69 771.5 L69 772.4 L70 772.4 L70 772.4 L71 772.4 L71 772.3 L72 772.3 L72 771.6 L73 771.6 L73 772.3 L74 772.3 L74 771.4 L75 771.4 L75 771.7 L76 771.7 L76 765.6 L77 765.6 L77 772.7 L78 772.7 L78 773.3 L79 773.3 L79 772.0 L80 772.0 L80 772.7 L81 772.7 L81 773.3 L82 773.3 L82 774.1 L83 774.1 L83 773.8 L84 773.8 L84 773.3 L85 773.3 L85 772.9 L86 772.9 L86 773.4 L87 773.4 L87 772.3 L88 772.3 L88 772.3 L89 772.3 L89 771.4 L90 771.4 L90 775.4 L91 775.4 L91 772.5 L92 772.5 L92 770.8 L93 770.8 L93 766.5 L94 766.5 L94 770.4 L95 770.4 L95 770.0 L96 770.0 L96 770.3 L97 770.3 L97 770.5 L98 770.5 L98 770.0 L99 770.0 L99 770.9 L100 770.9 L100 771.9 L101 771.9 L101 773.8 L102 773.8 L102 770.5 L103 770.5 L103 771.6 L104 771.6 L104 772.6 L105 772.6 L105 772.3 L106 772.3 L106 772.6 L107 772.6 L107 772.5 L108 772.5 L108 771.9 L109 771.9 L109 772.5 L110 772.5 L110 771.4 L111 771.4 L111 770.7 L112 770.7 L112 771.7 L113 771.7 L113 771.4 L114 771.4 L114 769.9 L115 769.9 L115 771.6 L116 771.6 L116 771.4 L117 771.4 L117 770.6 L118 770.6 L118 771.9 L119 771.9 L119 771.2 L120 771.2 L120 770.1 L121 770.1 L121 771.3 L122 771.3 L122 771.2 L123 771.2 L123 771.0 L124 771.0 L124 771.4 L125 771.4 L125 772.8 L126 772.8 L126 773.8 L127 773.8 L127 774.2 L128 774.2 L128 774.1 L129 774.1 L129 774.0 L130 774.0 L130 774.9 L131 774.9 L131 774.7 L132 774.7 L132 774.9 L133 774.9 L133 773.6 L134 773.6 L134 774.3 L135 774.3 L135 773.9 L136 773.9 L136 775.7 L137 775.7 L137 773.3 L138 773.3 L138 774.0 L139 774.0 L139 773.3 L140 773.3 L140 772.1 L141 772.1 L141 773.8 L142 773.8 L142 772.6 L143 772.6 L143 768.5 L144 768.5 L144 771.7 L145 771.7 L145 772.4 L146 772.4 L146 773.2 L147 773.2 L147 772.4 L148 772.4 L148 772.6 L149 772.6 L149 773.9 L150 773.9 L150 772.3 L151 772.3 L151 772.8 L152 772.8 L152 772.9 L153 772.9 L153 773.4 L154 773.4 L154 771.2 L155 771.2 L155 773.7 L156 773.7 L156 772.0 L157 772.0 L157 774.8 L158 774.8 L158 771.5 L159 771.5 L159 772.8 L160 772.8 L160 772.6 L161 772.6 L161 771.4 L162 771.4 L162 770.7 L163 770.7 L163 771.0 L164 771.0 L164 772.1 L165 772.1 L165 770.3 L166 770.3 L166 770.6 L167 770.6 L167 772.0 L168 772.0 L168 771.8 L169 771.8 L169 770.5 L170 770.5 L170 772.0 L171 772.0 L171 771.6 L172 771.6 L172 773.1 L173 773.1 L173 771.7 L174 771.7 L174 773.5 L175 773.5 L175 771.9 L176 771.9 L176 773.4 L177 773.4 L177 768.1 L178 768.1 L178 772.9 L179 772.9 L179 772.2 L180 772.2 L180 772.3 L181 772.3 L181 773.6 L182 773.6 L182 773.3 L183 773.3 L183 772.5 L184 772.5 L184 772.8 L185 772.8 L185 771.6 L186 771.6 L186 772.5 L187 772.5 L187 771.5 L188 771.5 L188 771.4 L189 771.4 L189 772.3 L190 772.3 L190 773.5 L191 773.5 L191 768.1 L192 768.1 L192 773.5 L193 773.5 L193 772.4 L194 772.4 L194 773.5 L195 773.5 L195 773.2 L196 773.2 L196 774.3 L197 774.3 L197 774.1 L198 774.1 L198 773.0 L199 773.0 L199 773.4 L200 773.4 L200 772.6 L201 772.6 L201 773.1 L202 773.1 L202 773.0 L203 773.0 L203 772.8 L204 772.8 L204 772.4 L205 772.4 L205 771.5 L206 771.5 L206 770.5 L207 770.5 L207 770.9 L208 770.9 L208 769.9 L209 769.9 L209 771.1 L210 771.1 L210 770.9 L211 770.9 L211 770.6 L212 770.6 L212 768.8 L213 768.8 L213 770.0 L214 770.0 L214 768.8 L215 768.8 L215 771.3 L216 771.3 L216 769.8 L217 769.8 L217 769.4 L218 769.4 L218 768.2 L219 768.2 L219 770.1 L220 770.1 L220 769.4 L221 769.4 L221 770.1 L222 770.1 L222 764.7 L223 764.7 L223 766.2 L224 766.2 L224 769.0 L225 769.0 L225 773.0 L226 773.0 L226 771.3 L227 771.3 L227 769.5 L228 769.5 L228 769.4 L229 769.4 L229 768.6 L230 768.6 L230 768.0 L231 768.0 L231 766.9 L232 766.9 L232 768.2 L233 768.2 L233 767.2 L234 767.2 L234 768.2 L235 768.2 L235 766.8 L236 766.8 L236 768.3 L237 768.3 L237 767.2 L238 767.2 L238 768.6 L239 768.6 L239 768.9 L240 768.9 L240 768.2 L241 768.2 L241 768.3 L242 768.3 L242 769.3 L243 769.3 L243 769.1 L244 769.1 L244 770.3 L245 770.3 L245 770.7 L246 770.7 L246 770.3 L247 770.3 L247 769.3 L248 769.3 L248 769.9 L249 769.9 L249 767.1 L250 767.1 L250 770.7 L251 770.7 L251 769.3 L252 769.3 L252 769.2 L253 769.2 L253 769.8 L254 769.8 L254 768.8 L255 768.8 L255 767.7 L256 767.7 L256 768.2 L257 768.2 L257 767.0 L258 767.0 L258 767.2 L259 767.2 L259 767.6 L260 767.6 L260 768.3 L261 768.3 L261 768.8 L262 768.8 L262 767.6 L263 767.6 L263 769.0 L264 769.0 L264 767.7 L265 767.7 L265 768.3 L266 768.3 L266 769.4 L267 769.4 L267 769.0 L268 769.0 L268 769.1 L269 769.1 L269 771.0 L270 771.0 L270 768.8 L271 768.8 L271 767.8 L272 767.8 L272 765.4 L273 765.4 L273 768.4 L274 768.4 L274 768.8 L275 768.8 L275 768.9 L276 768.9 L276 768.5 L277 768.5 L277 765.1 L278 765.1 L278 767.7 L279 767.7 L279 766.9 L280 766.9 L280 766.5 L281 766.5 L281 766.0 L282 766.0 L282 770.3 L283 770.3 L283 767.9 L284 767.9 L284 761.7 L285 761.7 L285 766.8 L286 766.8 L286 767.5 L287 767.5 L287 769.2 L288 769.2 L288 768.8 L289 768.8 L289 768.5 L290 768.5 L290 769.4 L291 769.4 L291 769.4 L292 769.4 L292 768.2 L293 768.2 L293 770.6 L294 770.6 L294 769.6 L295 769.6 L295 770.1 L296 770.1 L296 770.0 L297 770.0 L297 771.4 L298 771.4 L298 769.6 L299 769.6 L299 769.9 L300 769.9 L300 770.8 L301 770.8 L301 770.2 L302 770.2 L302 770.1 L303 770.1 L303 770.1 L304 770.1 L304 768.4 L305 768.4 L305 769.7 L306 769.7 L306 769.2 L307 769.2 L307 769.4 L308 769.4 L308 770.8 L309 770.8 L309 770.6 L310 770.6 L310 770.7 L311 770.7 L311 771.6 L312 771.6 L312 771.2 L313 771.2 L313 770.4 L314 770.4 L314 771.3 L315 771.3 L315 771.0 L316 771.0 L316 771.6 L317 771.6 L317 774.3 L318 774.3 L318 765.6 L319 765.6 L319 772.4 L320 772.4 L320 769.9 L321 769.9 L321 770.0 L322 770.0 L322 769.6 L323 769.6 L323 769.3 L324 769.3 L324 767.1 L325 767.1 L325 767.1 L326 767.1 L326 766.6 L327 766.6 L327 767.8 L328 767.8 L328 765.1 L329 765.1 L329 767.0 L330 767.0 L330 767.5 L331 767.5 L331 767.5 L332 767.5 L332 761.5 L333 761.5 L333 766.7 L334 766.7 L334 766.7 L335 766.7 L335 767.0 L336 767.0 L336 768.4 L337 768.4 L337 767.2 L338 767.2 L338 768.7 L339 768.7 L339 766.5 L340 766.5 L340 767.7 L341 767.7 L341 767.5 L342 767.5 L342 768.8 L343 768.8 L343 768.9 L344 768.9 L344 767.0 L345 767.0 L345 767.1 L346 767.1 L346 766.7 L347 766.7 L347 767.4 L348 767.4 L348 768.4 L349 768.4 L349 767.4 L350 767.4 L350 767.0 L351 767.0 L351 768.3 L352 768.3 L352 768.3 L353 768.3 L353 768.0 L354 768.0 L354 770.4 L355 770.4 L355 768.7 L356 768.7 L356 769.0 L357 769.0 L357 769.1 L358 769.1 L358 769.9 L359 769.9 L359 768.6 L360 768.6 L360 770.3 L361 770.3 L361 781.2 L362 781.2 L362 783.1 L363 783.1 L363 783.3 L364 783.3 L364 783.4 L365 783.4 L365 783.1 L366 783.1 L366 781.7 L367 781.7 L367 782.8 L368 782.8 L368 782.6 L369 782.6 L369 783.0 L370 783.0 L370 783.2 L371 783.2 L371 783.6 L372 783.6 L372 782.5 L373 782.5 L373 783.5 L374 783.5 L374 783.5 L375 783.5 L375 783.1 L376 783.1 L376 782.3 L377 782.3 L377 784.2 L378 784.2 L378 782.8 L379 782.8 L379 783.4 L380 783.4 L380 784.6 L381 784.6 L381 782.6 L382 782.6 L382 782.9 L383 782.9 L383 784.3 L384 784.3 L384 784.6 L385 784.6 L385 783.6 L386 783.6 L386 783.6 L387 783.6 L387 783.5 L388 783.5 L388 784.1 L389 784.1 L389 783.7 L390 783.7 L390 783.4 L391 783.4 L391 784.6 L392 784.6 L392 784.6 L393 784.6 L393 783.9 L394 783.9 L394 784.6 L395 784.6 L395 784.1 L396 784.1 L396 761.1 L397 761.1 L397 761.8 L398 761.8 L398 764.1 L399 764.1 L399 760.4 L400 760.4 L400 761.4 L401 761.4 L401 766.3 L402 766.3 L402 762.1 L403 762.1 L403 765.1 L404 765.1 L404 763.8 L405 763.8 L405 765.9 L406 765.9 L406 764.6 L407 764.6 L407 768.1 L408 768.1 L408 767.4 L409 767.4 L409 768.5 L410 768.5 L410 767.0 L411 767.0 L411 772.3 L412 772.3 L412 768.4 L413 768.4 L413 768.5 L414 768.5 L414 766.6 L415 766.6 L415 765.7 L416 765.7 L416 767.8 L417 767.8 L417 766.7 L418 766.7 L418 764.8 L419 764.8 L419 766.4 L420 766.4 L420 764.4 L421 764.4 L421 760.0 L422 760.0 L422 764.8 L423 764.8 L423 769.0 L424 769.0 L424 765.2 L425 765.2 L425 768.0 L426 768.0 L426 756.3 L427 756.3 L427 768.2 L428 768.2 L428 768.7 L429 768.7 L429 770.0 L430 770.0 L430 772.6 L431 772.6 L431 773.4 L432 773.4 L432 769.6 L433 769.6 L433 767.4 L434 767.4 L434 760.1 L435 760.1 L435 768.0 L436 768.0 L436 768.0 L437 768.0 L437 757.5 L438 757.5 L438 764.6 L439 764.6 L439 762.7 L440 762.7 L440 762.9 L441 762.9 L441 762.9 L442 762.9 L442 763.7 L443 763.7 L443 761.4 L444 761.4 L444 763.4 L445 763.4 L445 763.2 L446 763.2 L446 764.4 L447 764.4 L447 761.7 L448 761.7 L448 756.5 L449 756.5 L449 767.5 L450 767.5 L450 763.0 L451 763.0 L451 765.8 L452 765.8 L452 765.6 L453 765.6 L453 767.1 L454 767.1 L454 765.7 L455 765.7 L455 765.9 L456 765.9 L456 767.5 L457 767.5 L457 767.5 L458 767.5 L458 768.3 L459 768.3 L459 766.0 L460 766.0 L460 758.9 L461 758.9 L461 770.3 L462 770.3 L462 768.2 L463 768.2 L463 762.3 L464 762.3 L464 765.4 L465 765.4 L465 765.4 L466 765.4 L466 765.5 L467 765.5 L467 764.7 L468 764.7 L468 764.3 L469 764.3 L469 767.0 L470 767.0 L470 766.8 L471 766.8 L471 767.1 L472 767.1 L472 768.2 L473 768.2 L473 768.6 L474 768.6 L474 767.1 L475 767.1 L475 769.3 L476 769.3 L476 767.6 L477 767.6 L477 770.3 L478 770.3 L478 772.5 L479 772.5 L479 770.7 L480 770.7 L480 768.2 L481 768.2 L481 761.2 L482 761.2 L482 769.5 L483 769.5 L483 766.1 L484 766.1 L484 765.5 L485 765.5 L485 764.9 L486 764.9 L486 766.1 L487 766.1 L487 753.6 L488 753.6 L488 763.5 L489 763.5 L489 763.7 L490 763.7 L490 763.8 L491 763.8 L491 762.2 L492 762.2 L492 756.7 L493 756.7 L493 761.7 L494 761.7 L494 763.0 L495 763.0 L495 761.6 L496 761.6 L496 756.8 L497 756.8 L497 762.9 L498 762.9 L498 764.6 L499 764.6 L499 762.9 L500 762.9 L500 764.3 L501 764.3 L501 762.3 L502 762.3 L502 763.4 L503 763.4 L503 763.8 L504 763.8 L504 761.6 L505 761.6 L505 763.8 L506 763.8 L506 750.5 L507 750.5 L507 762.2 L508 762.2 L508 761.8 L509 761.8 L509 761.2 L510 761.2 L510 762.2 L511 762.2 L511 759.9 L512 759.9 L512 761.6 L513 761.6 L513 760.6 L514 760.6 L514 761.5 L515 761.5 L515 760.6 L516 760.6 L516 762.4 L517 762.4 L517 764.2 L518 764.2 L518 763.4 L519 763.4 L519 765.2 L520 765.2 L520 750.8 L521 750.8 L521 765.0 L522 765.0 L522 764.9 L523 764.9 L523 767.0 L524 767.0 L524 767.3 L525 767.3 L525 765.6 L526 765.6 L526 767.9 L527 767.9 L527 767.3 L528 767.3 L528 767.2 L529 767.2 L529 767.4 L530 767.4 L530 755.8 L531 755.8 L531 752.8 L532 752.8 L532 766.6 L533 766.6 L533 764.8 L534 764.8 L534 765.2 L535 765.2 L535 764.0 L536 764.0 L536 763.5 L537 763.5 L537 754.3 L538 754.3 L538 763.9 L539 763.9 L539 763.2 L540 763.2 L540 764.4 L541 764.4 L541 760.2 L542 760.2 L542 757.2 L543 757.2 L543 755.2 L544 755.2 L544 766.9 L545 766.9 L545 765.0 L546 765.0 L546 767.5 L547 767.5 L547 766.5 L548 766.5 L548 767.3 L549 767.3 L549 764.4 L550 764.4 L550 764.7 L551 764.7 L551 763.7 L552 763.7 L552 763.3 L553 763.3 L553 765.2 L554 765.2 L554 755.3 L555 755.3 L555 762.1 L556 762.1 L556 761.1 L557 761.1 L557 760.8 L558 760.8 L558 761.4 L559 761.4 L559 762.1 L560 762.1 L560 761.1 L561 761.1 L561 762.7 L562 762.7 L562 762.5 L563 762.5 L563 761.3 L564 761.3 L564 763.4 L565 763.4 L565 764.2 L566 764.2 L566 763.2 L567 763.2 L567 763.2 L568 763.2 L568 764.8 L569 764.8 L569 770.5 L570 770.5 L570 765.9 L571 765.9 L571 765.8 L572 765.8 L572 765.5 L573 765.5 L573 767.7 L574 767.7 L574 767.5 L575 767.5 L575 754.5 L576 754.5 L576 768.0 L577 768.0 L577 765.4 L578 765.4 L578 766.2 L579 766.2 L579 763.5 L580 763.5 L580 766.0 L581 766.0 L581 766.2 L582 766.2 L582 767.3 L583 767.3 L583 762.7 L584 762.7 L584 759.9 L585 759.9 L585 767.6 L586 767.6 L586 766.8 L587 766.8 L587 767.2 L588 767.2 L588 769.3 L589 769.3 L589 769.5 L590 769.5 L590 770.5 L591 770.5 L591 768.5 L592 768.5 L592 770.3 L593 770.3 L593 771.9 L594 771.9 L594 770.2 L595 770.2 L595 769.9 L596 769.9 L596 768.7 L597 768.7 L597 770.6 L598 770.6 L598 770.7 L599 770.7 L599 768.9 L600 768.9 L600 769.3 L601 769.3 L601 768.7 L602 768.7 L602 764.9 L603 764.9 L603 766.6 L604 766.6 L604 764.9 L605 764.9 L605 763.3 L606 763.3 L606 764.5 L607 764.5 L607 765.0 L608 765.0 L608 762.5 L609 762.5 L609 765.0 L610 765.0 L610 762.7 L611 762.7 L611 762.9 L612 762.9 L612 759.3 L613 759.3 L613 765.8 L614 765.8 L614 763.8 L615 763.8 L615 763.8 L616 763.8 L616 765.9 L617 765.9 L617 765.5 L618 765.5 L618 765.3 L619 765.3 L619 768.4 L620 768.4 L620 766.0 L621 766.0 L621 766.4 L622 766.4 L622 765.4 L623 765.4 L623 762.7 L624 762.7 L624 764.2 L625 764.2 L625 763.8 L626 763.8 L626 761.6 L627 761.6 L627 762.0 L628 762.0 L628 760.9 L629 760.9 L629 761.3 L630 761.3 L630 761.3 L631 761.3 L631 762.0 L632 762.0 L632 763.7 L633 763.7 L633 750.5 L634 750.5 L634 761.2 L635 761.2 L635 763.5 L636 763.5 L636 763.2 L637 763.2 L637 765.6 L638 765.6 L638 766.2 L639 766.2 L639 768.7 L640 768.7 L640 768.1 L641 768.1 L641 766.9 L642 766.9 L642 769.4 L643 769.4 L643 766.6 L644 766.6 L644 769.0 L645 769.0 L645 756.3 L646 756.3 L646 765.9 L647 765.9 L647 765.3 L648 765.3 L648 762.3 L649 762.3 L649 764.3 L650 764.3 L650 765.1 L651 765.1 L651 765.6 L652 765.6 L652 764.3 L653 764.3 L653 763.7 L654 763.7 L654 761.6 L655 761.6 L655 761.9 L656 761.9 L656 764.6 L657 764.6 L657 763.5 L658 763.5 L658 764.0 L659 764.0 L659 763.6 L660 763.6 L660 750.8 L661 750.8 L661 760.0 L662 760.0 L662 767.0 L663 767.0 L663 766.0 L664 766.0 L664 764.4 L665 764.4 L665 765.2 L666 765.2 L666 764.4 L667 764.4 L667 764.3 L668 764.3 L668 763.7 L669 763.7 L669 761.8 L670 761.8 L670 763.1 L671 763.1 L671 762.6 L672 762.6 L672 760.0 L673 760.0 L673 759.8 L674 759.8 L674 760.1 L675 760.1 L675 750.5 L676 750.5 L676 761.0 L677 761.0 L677 760.3 L678 760.3 L678 759.8 L679 759.8 L679 759.0 L680 759.0 L680 760.9 L681 760.9 L681 760.6 L682 760.6 L682 761.7 L683 761.7 L683 763.5 L684 763.5 L684 762.6 L685 762.6 L685 763.6 L686 763.6 L686 765.2 L687 765.2 L687 765.3 L688 765.3 L688 766.1 L689 766.1 L689 767.0 L690 767.0 L690 766.9 L691 766.9 L691 765.2 L692 765.2 L692 767.3 L693 767.3 L693 766.6 L694 766.6 L694 766.9 L695 766.9 L695 770.0 L696 770.0 L696 751.0 L697 751.0 L697 766.4 L698 766.4 L698 763.5 L699 763.5 L699 764.3 L700 764.3 L700 766.1 L701 766.1 L701 766.7 L702 766.7 L702 758.7 L703 758.7 L703 765.2 L704 765.2 L704 766.7 L705 766.7 L705 767.3 L706 767.3 L706 767.3 L707 767.3 L707 767.4 L708 767.4 L708 768.8 L709 768.8 L709 768.0 L710 768.0 L710 769.8 L711 769.8 L711 767.7 L712 767.7 L712 768.1 L713 768.1 L713 767.9 L714 767.9 L714 768.2 L715 768.2 L715 759.4 L716 759.4 L716 765.9 L717 765.9 L717 765.7 L718 765.7 L718 765.6 L719 765.6 L719 764.3 L720 764.3 L720 763.5 L721 763.5 L721 764.6 L722 764.6 L722 762.3 L723 762.3 L723 766.5 L724 766.5 L724 764.4 L725 764.4 L725 764.1 L726 764.1 L726 761.8 L727 761.8 L727 764.8 L728 764.8 L728 763.8 L729 763.8 L729 764.4 L730 764.4 L730 763.9 L731 763.9 L731 765.7 L732 765.7 L732 766.7 L733 766.7 L733 766.5 L734 766.5 L734 771.1 L735 771.1 L735 760.9 L736 760.9 L736 759.2 L737 759.2 L737 766.6 L738 766.6 L738 766.7 L739 766.7 L739 766.8 L740 766.8 L740 764.2 L741 764.2 L741 766.2 L742 766.2 L742 765.4 L743 765.4 L743 766.0 L744 766.0 L744 763.7 L745 763.7 L745 764.8 L746 764.8 L746 769.2 L747 769.2 L747 765.5 L748 765.5 L748 764.4 L749 764.4 L749 766.0 L750 766.0 L750 766.3 L751 766.3 L751 766.1 L752 766.1 L752 766.7 L753 766.7 L753 768.8 L754 768.8 L754 769.3 L755 769.3 L755 771.1 L756 771.1 L756 770.6 L757 770.6 L757 770.7 L758 770.7 L758 770.3 L759 770.3 L759 769.5 L760 769.5 L760 768.3 L761 768.3 L761 770.7 L762 770.7 L762 767.4 L763 767.4 L763 769.2 L764 769.2 L764 763.8 L765 763.8 L765 765.2 L766 765.2 L766 762.2 L767 762.2 L767 766.2 L768 766.2 L768 765.3 L769 765.3 L769 763.1 L770 763.1 L770 765.2 L771 765.2 L771 763.6 L772 763.6 L772 763.4 L773 763.4 L773 763.1 L774 763.1 L774 765.1 L775 765.1 L775 764.2 L776 764.2 L776 764.7 L777 764.7 L777 764.5 L778 764.5 L778 765.7 L779 765.7 L779 756.8 L780 756.8 L780 766.0 L781 766.0 L781 764.7 L782 764.7 L782 751.0 L783 751.0 L783 764.1 L784 764.1 L784 763.0 L785 763.0 L785 763.4 L786 763.4 L786 750.9 L787 750.9 L787 751.7 L788 751.7 L788 760.7 L789 760.7 L789 764.8 L790 764.8 L790 760.3 L791 760.3 L791 750.5 L792 750.5 L792 759.6 L793 759.6 L793 758.9 L794 758.9 L794 760.3 L795 760.3 L795 759.7 L796 759.7 L796 761.3 L797 761.3 L797 761.6 L798 761.6 L798 763.1 L799 763.1 L799 763.4 L800 763.4 L800 764.6 L801 764.6 L801 763.0 L802 763.0 L802 764.2 L803 764.2 L803 766.2 L804 766.2 L804 765.7 L805 765.7 L805 754.3 L806 754.3 L806 765.0 L807 765.0 L807 767.6 L808 767.6 L808 767.5 L809 767.5 L809 764.3 L810 764.3 L810 764.8 L811 764.8 L811 763.6 L812 763.6 L812 764.2 L813 764.2 L813 763.6 L814 763.6 L814 763.4 L815 763.4 L815 763.3 L816 763.3 L816 758.0 L817 758.0 L817 765.3 L818 765.3 L818 762.7 L819 762.7 L819 764.7 L820 764.7 L820 763.8 L821 763.8 L821 765.8 L822 765.8 L822 765.7 L823 765.7 L823 771.0 L824 771.0 L824 770.1 L825 770.1 L825 768.5 L826 768.5 L826 770.5 L827 770.5 L827 770.2 L828 770.2 L828 772.2 L829 772.2 L829 770.7 L830 770.7 L830 769.7 L831 769.7 L831 770.7 L832 770.7 L832 769.9 L833 769.9 L833 768.6 L834 768.6 L834 769.2 L835 769.2 L835 768.3 L836 768.3 L836 768.2 L837 768.2 L837 769.9 L838 769.9 L838 769.2 L839 769.2 L839 769.3 L840 769.3 L840 768.0 L841 768.0 L841 767.9 L842 767.9 L842 769.7 L843 769.7 L843 768.5 L844 768.5 L844 768.3 L845 768.3 L845 768.4 L846 768.4 L846 766.2 L847 766.2 L847 769.3 L848 769.3 L848 770.7 L849 770.7 L849 771.2 L850 771.2 L850 770.7 L851 770.7 L851 771.1 L852 771.1 L852 771.0 L853 771.0 L853 771.7 L854 771.7 L854 771.2 L855 771.2 L855 770.5 L856 770.5 L856 771.0 L857 771.0 L857 769.7 L858 769.7 L858 770.4 L859 770.4 L859 774.4 L860 774.4 L860 770.0 L861 770.0 L861 770.8 L862 770.8 L862 769.5 L863 769.5 L863 770.4 L864 770.4 L864 771.0 L865 771.0 L865 771.3 L866 771.3 L866 771.1 L867 771.1 L867 771.0 L868 771.0 L868 773.0 L869 773.0 L869 772.4 L870 772.4 L870 771.8 L871 771.8 L871 773.7 L872 773.7 L872 772.2 L873 772.2 L873 772.9 L874 772.9 L874 772.3 L875 772.3 L875 772.6 L876 772.6 L876 773.2 L877 773.2 L877 772.6 L878 772.6 L878 773.1 L879 773.1 L879 771.2 L880 771.2 L880 771.6 L881 771.6 L881 771.6 L882 771.6 L882 771.8 L883 771.8 L883 770.3 L884 770.3 L884 771.6 L885 771.6 L885 769.9 L886 769.9 L886 770.2 L887 770.2 L887 769.5 L888 769.5 L888 770.4 L889 770.4 L889 771.0 L890 771.0 L890 771.1 L891 771.1 L891 770.9 L892 770.9 L892 770.9 L893 770.9 L893 765.6 L894 765.6 L894 771.2 L895 771.2 L895 770.7 L896 770.7 L896 771.8 L897 771.8 L897 771.3 L898 771.3 L898 766.0 L899 766.0 L899 770.0 L900 770.0 L900 770.5 L901 770.5 L901 769.8 L902 769.8 L902 769.2 L903 769.2 L903 772.3 L904 772.3 L904 767.5 L905 767.5 L905 770.3 L906 770.3 L906 770.4 L907 770.4 L907 768.5 L908 768.5 L908 768.3 L909 768.3 L909 770.2 L910 770.2 L910 769.6 L911 769.6 L911 768.5 L912 768.5 L912 769.6 L913 769.6 L913 769.0 L914 769.0 L914 770.6 L915 770.6 L915 774.4 L916 774.4 L916 769.9 L917 769.9 L917 772.3 L918 772.3 L918 771.8 L919 771.8 L919 770.8 L920 770.8 L920 772.8 L921 772.8 L921 771.4 L922 771.4 L922 770.8 L923 770.8 L923 772.6 L924 772.6 L924 770.7 L925 770.7 L925 772.0 L926 772.0 L926 770.7 L927 770.7 L927 771.5 L928 771.5 L928 771.7 L929 771.7 L929 771.3 L930 771.3 L930 771.2 L931 771.2 L931 771.3 L932 771.3 L932 765.1 L933 765.1 L933 770.7 L934 770.7 L934 769.3 L935 769.3 L935 770.9 L936 770.9 L936 771.1 L937 771.1 L937 769.6 L938 769.6 L938 770.6 L939 770.6 L939 769.9 L940 769.9 L940 770.4 L941 770.4 L941 771.3 L942 771.3 L942 770.3 L943 770.3 L943 771.5 L944 771.5 L944 771.1 L945 771.1 L945 771.2 L946 771.2 L946 769.5 L947 769.5 L947 770.7 L948 770.7 L948 770.0 L949 770.0 L949 773.2 L950 773.2 L950 770.0 L951 770.0 L951 768.3 L952 768.3 L952 768.5 L953 768.5 L953 768.7 L954 768.7 L954 771.3 L955 771.3 L955 766.8 L956 766.8 L956 768.8 L957 768.8 L957 767.1 L958 767.1 L958 767.6 L959 767.6 L959 762.0 L960 762.0 L960 768.9 L961 768.9 L961 769.9 L962 769.9 L962 769.1 L963 769.1 L963 769.6 L964 769.6 L964 770.3 L965 770.3 L965 770.7 L966 770.7 L966 769.6 L967 769.6 L967 771.0 L968 771.0 L968 771.3 L969 771.3 L969 770.4 L970 770.4 L970 771.1 L971 771.1 L971 769.9 L972 769.9 L972 770.1 L973 770.1 L973 771.1 L974 771.1 L974 770.3 L975 770.3 L975 771.0 L976 771.0 L976 770.3 L977 770.3 L977 769.1 L978 769.1 L978 771.0 L979 771.0 L979 770.1 L980 770.1 L980 770.7 L981 770.7 L981 769.7 L982 769.7 L982 771.4 L983 771.4 L983 766.6 L984 766.6 L984 771.3 L985 771.3 L985 772.3 L986 772.3 L986 771.0 L987 771.0 L987 772.3 L988 772.3 L988 772.4 L989 772.4 L989 773.2 L990 773.2 L990 771.3 L991 771.3 L991 772.2 L992 772.2 L992 766.2 L993 766.2 L993 772.5 L994 772.5 L994 772.6 L995 772.6 L995 768.3 L996 768.3 L996 770.7 L997 770.7 L997 771.9 L998 771.9 L998 770.3 L999 770.3 L999 769.8 L1000 769.8 L1000 769.2 L1001 769.2 L1001 770.8 L1002 770.8 L1002 769.7 L1003 769.7 L1003 770.2 L1004 770.2 L1004 769.9 L1005 769.9 L1005 769.6 L1006 769.6 L1006 770.7 L1007 770.7 L1007 769.5 L1008 769.5 L1008 769.5 L1009 769.5 L1009 770.7 L1010 770.7 L1010 769.9 L1011 769.9 L1011 771.0 L1012 771.0 L1012 770.3 L1013 770.3 L1013 771.5 L1014 771.5 L1014 774.1 L1015 774.1 L1015 770.3 L1016 770.3 L1016 770.2 L1017 770.2 L1017 771.7 L1018 771.7 L1018 769.6 L1019 769.6 L1019 771.0 L1020 771.0 L1020 770.0 L1021 770.0 L1021 770.1 L1022 770.1 L1022 770.2 L1023 770.2 L1023 771.0 L1024 771.0 L1024 768.9 L1025 768.9 L1025 769.1 L1026 769.1 L1026 769.5 L1027 769.5 L1027 764.9 L1028 764.9 L1028 771.1 L1029 771.1 L1029 771.4 L1030 771.4 L1030 770.3 L1031 770.3 L1031 772.1 L1032 772.1 L1032 772.0 L1033 772.0 L1033 772.7 L1034 772.7 L1034 772.1 L1035 772.1 L1035 772.5 L1036 772.5 L1036 772.8 L1037 772.8 L1037 772.9 L1038 772.9 L1038 773.6 L1039 773.6 L1039 773.6 L1040 773.6 L1040 772.9 L1041 772.9 L1041 773.0 L1042 773.0 L1042 772.1 L1043 772.1 L1043 771.7 L1044 771.7 L1044 771.4 L1045 771.4 L1045 771.0 L1046 771.0 L1046 771.1 L1047 771.1 L1047 771.1 L1048 771.1 L1048 771.4 L1049 771.4 L1049 770.7 L1050 770.7 L1050 767.1 L1051 767.1 L1051 769.9 L1052 769.9 L1052 770.6 L1053 770.6 L1053 774.3 L1054 774.3 L1054 771.4 L1055 771.4 L1055 771.8 L1056 771.8 L1056 770.3 L1057 770.3 L1057 772.1 L1058 772.1 L1058 771.3 L1059 771.3 L1059 772.4 L1060 772.4 L1060 770.8 L1061 770.8 L1061 772.9 L1062 772.9 L1062 772.7 L1063 772.7 L1063 772.3 L1064 772.3 L1064 772.1 L1065 772.1 L1065 772.5 L1066 772.5 L1066 772.6 L1067 772.6 L1067 772.8 L1068 772.8 L1068 772.8 L1069 772.8 L1069 768.2 L1070 768.2 L1070 774.3 L1071 774.3 L1071 773.9 L1072 773.9 L1072 775.6 L1073 775.6 L1073 775.1 L1074 775.1 L1074 776.8 L1075 776.8 L1075 777.2 L1076 777.2 L1076 778.1 L1077 778.1 L1077 778.2 L1078 778.2 L1078 779.3 L1079 779.3 L1079 778.7 L1080 778.7 L1080 780.1 L1081 780.1 L1081 781.0 L1082 781.0 L1082 780.9 L1083 780.9 L1083 782.4 L1084 782.4 L1084 782.4 L1085 782.4 L1085 781.7 L1086 781.7 L1086 783.5 L1087 783.5 L1087 782.4 L1088 782.4 L1088 784.6 L1089 784.6 L1089 784.1 L1090 784.1 L1090 783.9 L1091 783.9 L1091 783.4 L1092 783.4 L1092 785 Z" fill="#8ae2d8"/></svg></div>
<div class="abs" style="left:73px;top:365px;font-size:13.500px;line-height:16px;color:#e6f4f2;white-space:nowrap">Music.mp3</div>
<div class="abs" style="left:572px;top:51px;width:1px;height:372px;background:#e85a58"></div>
<svg class="abs" style="left:566px;top:40px" width="13" height="19" viewBox="0 0 13 19"><path d="M3 1 h7 a2 2 0 0 1 2 2 v10.800 l-5.500 4.700 l-5.500 -4.700 v-10.800 a2 2 0 0 1 2 -2z" fill="#f05a5a"/></svg>
</div>
<div id="bot">
<div class="abs" style="left:13px;top:10px;font-size:12px;line-height:18px;color:#c9ccdd;white-space:nowrap;letter-spacing:0.300px">缩放:</div>
<svg class="abs" style="left:65px;top:12px" width="16" height="8" viewBox="0 0 16 8"><path d="M1 7.500 L5.500 3.500 L7.500 5.300 L10 2.500 L14 7.500z" fill="#555a72"/></svg>
<div class="abs" style="left:85px;top:15px;width:81px;height:1.500px;background:#3d4259"></div>
<div class="abs" style="left:128px;top:10px;width:12px;height:12px;border-radius:50%;background:#0a8fff;border:1.500px solid #e8ecff"></div>
<svg class="abs" style="left:171px;top:11px" width="20" height="9" viewBox="0 0 20 9"><path d="M1 8.500 L6.500 3.500 L9 5.800 L13 1 L19 8.500z" fill="#555a72"/></svg>
<div class="abs" style="left:478px;top:9px;font-size:12px;line-height:18px;color:#c9ccdd;white-space:nowrap;letter-spacing:0.300px">项目长度: <span style="font-family:'DejaVu Sans',sans-serif;font-weight:400;font-size:12.400px;letter-spacing:0.400px;margin-left:3px">00:51</span></div>
</div>
<div class="abs" style="left:0;top:0;width:1282px;height:1px;background:#5a5a5a"></div>
<div class="abs" style="left:0;top:0;width:1px;height:860px;background:#747474"></div>
<div class="abs" style="left:1281px;top:0;width:1px;height:860px;background:#6a6a6a"></div>
<div class="abs" style="left:0;top:859px;width:1282px;height:1px;background:#6a6a6a"></div>
</div></body></html>
